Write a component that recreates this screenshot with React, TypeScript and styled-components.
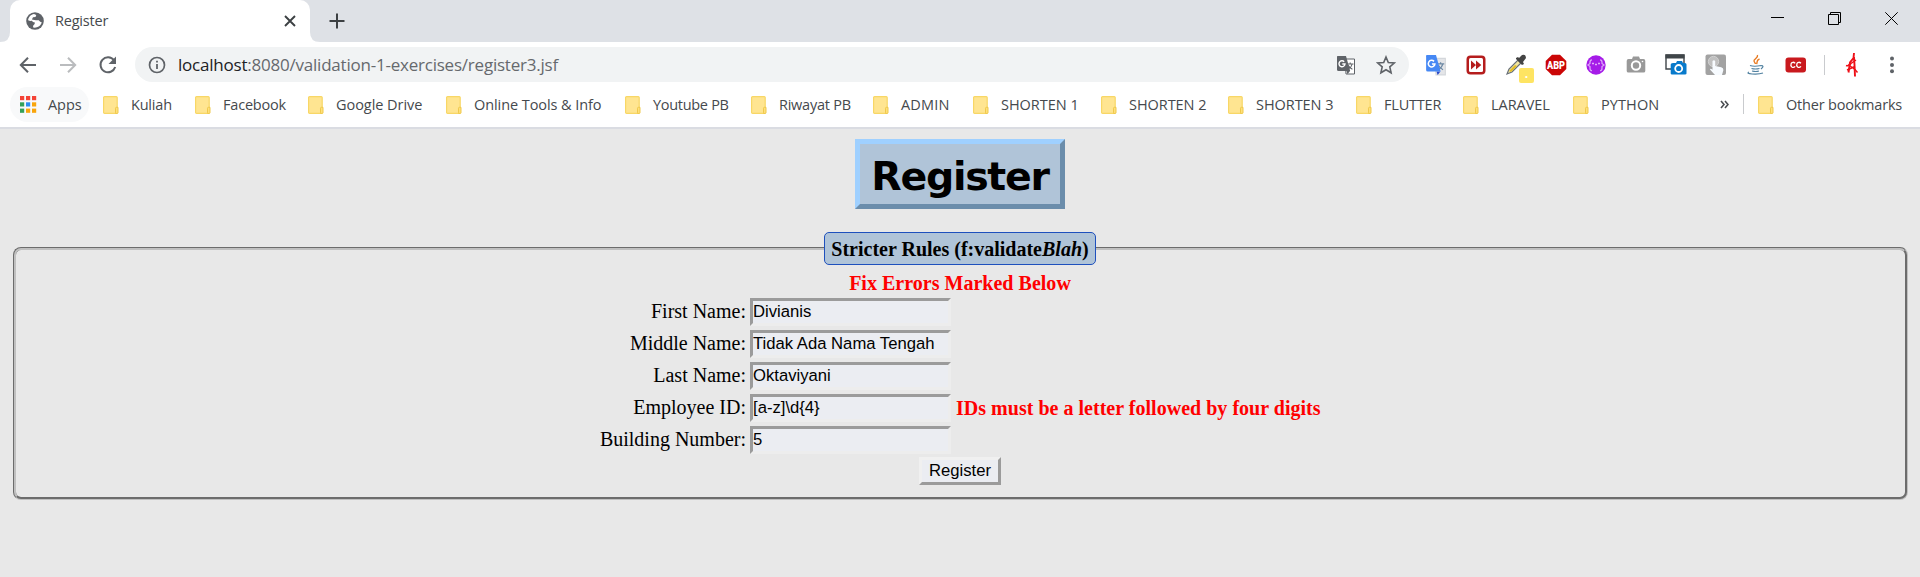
import React from 'react';
import styled, { createGlobalStyle } from 'styled-components';

const GlobalStyle = createGlobalStyle`
  * { box-sizing: border-box; }
  body { margin: 0; background: #e8e8e8; }
`;

const UI_FONT = "'Segoe UI', 'Open Sans', 'Noto Sans', sans-serif";

const Window = styled.div`
  width: 1920px;
  height: 577px;
  display: flex;
  flex-direction: column;
  overflow: hidden;
  background: #e8e8e8;
`;

/* ---------- Tab strip ---------- */
const TabStrip = styled.header`
  height: 42px;
  flex: none;
  display: flex;
  align-items: stretch;
  background: #dee1e6;
  padding-right: 22px;
`;
const TabCurve = styled.svg`
  width: 10px;
  height: 10px;
  align-self: flex-end;
  display: block;
`;
const Tab = styled.div`
  width: 300px;
  display: flex;
  align-items: center;
  background: #fff;
  border-radius: 10px 10px 0 0;
  padding: 0 14px 0 16px;
`;
const TabTitle = styled.span`
  flex: 1;
  margin-left: 11px;
  font: 14.5px/20px ${UI_FONT};
  letter-spacing: -0.2px;
  color: #45494d;
`;
const NewTab = styled.div`
  display: flex;
  align-items: center;
  margin-left: 9px;
`;
const WindowControls = styled.div`
  margin-left: auto;
  display: flex;
  gap: 44px;
  padding-top: 12px;
`;

/* ---------- Toolbar ---------- */
const Toolbar = styled.div`
  height: 45px;
  flex: none;
  display: flex;
  align-items: center;
  background: #fff;
  padding: 0 25px 0 18px;
`;
const NavButtons = styled.div`
  display: flex;
  gap: 20px;
  width: 117px;
`;
const Omnibox = styled.div`
  width: 1274px;
  height: 35px;
  display: flex;
  align-items: center;
  border-radius: 18px;
  background: #f1f3f4;
  padding: 0 13px 0 13px;
`;
const Url = styled.span`
  flex: 1;
  margin-left: 12px;
  font: 17px/24px ${UI_FONT};
  letter-spacing: -0.22px;
  color: #66696d;
`;
const Host = styled.span`
  color: #202124;
`;
const OmniboxActions = styled.div`
  display: flex;
  align-items: center;
  gap: 20px;
`;
const Extensions = styled.div`
  display: flex;
  align-items: center;
  gap: 16px;
  margin-left: 15px;
`;
const ExtensionSlot = styled.div`
  width: 24px;
  height: 28px;
  position: relative;
  display: flex;
  align-items: center;
  justify-content: center;
`;
const Badge = styled.span`
  position: absolute;
  left: 15px;
  top: 17px;
  width: 15px;
  height: 15px;
  border-radius: 2px;
  background: #fee462;
  color: #fff;
  font: bold 12px/11px ${UI_FONT};
  text-align: center;
`;
const ToolbarDivider = styled.div`
  width: 1px;
  height: 20px;
  background: #c9cbce;
  margin-left: 16px;
`;
const ProfileArea = styled.div`
  display: flex;
  align-items: center;
  margin-left: auto;
  gap: 29px;
`;

/* ---------- Bookmarks ---------- */
const BookmarkBar = styled.nav`
  height: 42px;
  flex: none;
  display: flex;
  align-items: flex-start;
  background: #fff;
  border-bottom: 2px solid #dadce2;
  padding-left: 10px;
`;
const AppsButton = styled.div`
  width: 79px;
  height: 35px;
  margin-right: 14px;
  display: flex;
  align-items: center;
  gap: 11px;
  padding-left: 10px;
  border-radius: 18px;
  background: #f8f9fa;
`;
const Bookmark = styled.div<{ $width: number }>`
  width: ${(p) => p.$width}px;
  height: 35px;
  flex: none;
  display: flex;
  align-items: center;
  gap: 11px;
`;
const BookmarkLabel = styled.span<{ $track?: number }>`
  font: 14.5px/20px ${UI_FONT};
  letter-spacing: ${(p) => p.$track ?? -0.2}px;
  color: #45494d;
  white-space: nowrap;
`;
const Overflow = styled.div`
  width: 23px;
  height: 35px;
  display: flex;
  align-items: center;
  margin-left: 27px;
`;
const BookmarkDivider = styled.div`
  width: 1px;
  height: 20px;
  margin: 7px 14px 0 0;
  background: #c9cbce;
`;

/* ---------- Page ---------- */
const Page = styled.main`
  flex: 1;
  display: flex;
  flex-direction: column;
  align-items: center;
  padding: 10px 12px 0 12px;
  font: 20px/23px 'Times New Roman', 'Liberation Serif', serif;
  color: #000;
`;
const PageTitle = styled.h1`
  width: 210px;
  height: 70px;
  margin: 0 0 23px;
  border: 5px solid;
  border-color: #9fd0ff #6b8dab #6b8dab #9fd0ff;
  background: #b0c4d8;
  font: bold 39.5px/64px Verdana, 'DejaVu Sans', sans-serif;
  letter-spacing: -1.3px;
  text-align: center;
`;
const FormFrame = styled.fieldset`
  align-self: stretch;
  height: 268px;
  margin: 0 0 0 1px;
  padding: 0 1px 0 0;
  border: 3px groove #c0c0c0;
  border-radius: 8px;
  display: block;
`;
const FormLegend = styled.legend`
  width: 272px;
  height: 33px;
  margin: 0 auto;
  padding: 0;
  border: 1px solid #1e50bd;
  border-radius: 5px;
  background: #b0c4d8;
  font-weight: bold;
  line-height: 32px;
  text-align: center;
`;
const FormBody = styled.form`
  display: flex;
  flex-direction: column;
  align-items: center;
`;
const ErrorText = styled.strong`
  color: #f00;
  letter-spacing: 0.02px;
  white-space: nowrap;
`;
const ErrorHeading = styled.div`
  height: 32px;
  padding-top: 7px;
`;
const Fields = styled.div`
  display: grid;
  grid-template-columns: 148px 201px 367px;
  grid-auto-rows: 28px;
  gap: 4px 5px;
  align-items: center;
  padding-top: 1px;
`;
const FieldLabel = styled.label`
  margin: 0 -1px 1px 0;
  text-align: right;
  white-space: nowrap;
`;
const FieldInput = styled.input`
  width: 201px;
  height: 28px;
  padding: 0 0 1px;
  border: 3px solid;
  border-color: #9b9b9b #ededed #ededed #9b9b9b;
  border-radius: 0;
  background: #ebedf2;
  color: #000;
  font: 16.67px Arial, 'Liberation Sans', sans-serif;
  outline: none;
`;
const SubmitButton = styled.button`
  width: 82px;
  height: 28px;
  margin-top: 3px;
  padding: 0 0 1px;
  border: 3px solid;
  border-color: #f0f0f0 #9b9b9b #9b9b9b #f0f0f0;
  background: #ebedf2;
  color: #000;
  font: 16.67px Arial, 'Liberation Sans', sans-serif;
`;

/* ---------- Icons ---------- */
const Globe = () => (
  <svg width="18" height="18" viewBox="0 0 18 18">
    <circle cx="9" cy="9" r="8.8" fill="#5f6368" />
    <path d="M8 2c-3 .4-5.600 3-5.900 6.200L4.200 9l1.600-.2L7 10l1.900.6-.3 1.500-1.500 1.700v1.700c3.700.8 7.800-1.400 8.600-5.300l-1.500-.4-1.500-1.600H9.900L8.400 7.900 5.900 7.500 7 5.300 9.500 4.900 10.300 3z" fill="#fff" />
  </svg>
);
const Back = ({ flip = false }: { flip?: boolean }) => (
  <svg width="20" height="20" viewBox="0 0 20 20" fill="none" stroke={flip ? '#babcbe' : '#5f6368'} strokeWidth="2">
    <path d={flip ? 'M2 10h15M10 2.700 17.200 10 10 17.300' : 'M18 10H3M10 2.700 2.800 10 10 17.300'} />
  </svg>
);
const Reload = () => (
  <svg width="20" height="20" viewBox="0 0 20 20">
    <path d="M16 5.200A7.500 7.500 0 1 0 17.200 12" fill="none" stroke="#5f6368" strokeWidth="2" />
    <path d="M18 1.500V9h-7.500z" fill="#5f6368" />
  </svg>
);
const Info = () => (
  <svg width="18" height="18" viewBox="0 0 18 18">
    <circle cx="9" cy="9" r="7.500" fill="none" stroke="#5f6368" strokeWidth="1.700" />
    <path d="M8.100 8h1.800v5H8.100zM8.100 4.800h1.800v1.800H8.100z" fill="#5f6368" />
  </svg>
);
const Translate = ({ colored = false }: { colored?: boolean }) => (
  <svg width={colored ? 22 : 20} height={colored ? 22 : 20} viewBox="0 0 20 20">
    <path d="M9 4h9.500v15H10z" fill={colored ? '#e4e5e8' : '#fff'} stroke={colored ? '#d4d7db' : '#5f6368'} />
    <path d="M11 9h6.500M14.200 7.500V9m2 0c-.5 2.300-2 4-4 5m0-3.700c.8 1.800 2.200 3.100 4.200 4" fill="none" stroke={colored ? '#6d89a4' : '#5f6368'} strokeWidth="1.100" />
    <path d="m10.500 16 3.500 0-2.500 3.200z" fill={colored ? '#2647c9' : '#5f6368'} />
    <path d="M1.500 1H10l4.200 15H2.500Q1 16 1 14.500V2q0-1 .5-1z" fill={colored ? '#4688f4' : '#5f6368'} />
    <path d="M8.200 6.700A3 3 0 1 0 9 9H6.300" fill="none" stroke="#fff" strokeWidth="1.400" />
  </svg>
);
const Star = () => (
  <svg width="20" height="20" viewBox="0 0 20 20" fill="none" stroke="#5f6368" strokeWidth="1.600">
    <path d="m10 2 2.300 5.500 6 .5-4.500 3.900 1.300 5.900L10 14.700l-5.100 3.100 1.300-5.900L1.700 8l6-.5z" />
  </svg>
);
const FastForward = () => (
  <svg width="20" height="20" viewBox="0 0 20 20">
    <rect x=".5" y=".5" width="19" height="19" rx="4" fill="#b51d1d" />
    <rect x="3" y="3" width="14" height="14" rx="1.500" fill="#fff" />
    <path d="m5 5.500 5 4.500-5 4.500zM10 5.500l5.300 4.500-5.300 4.500z" fill="#b51d1d" />
  </svg>
);
const Dropper = () => (
  <svg width="22" height="22" viewBox="0 0 22 22">
    <path d="M2 20 4 15 13 6l3 3-9 9z" fill="#f1e5a0" stroke="#687078" strokeWidth="1.200" />
    <path d="m4 17 6-6 2 1-6 6z" fill="#e4be25" />
    <path d="m11 4 2-1 1 1 3-3q4-1 4 3l-3 4 1 2-2 1-6-6z" fill="#444" />
  </svg>
);
const AdBlock = () => (
  <svg width="22" height="22" viewBox="0 0 22 22">
    <path d="M7 .7h8l6.300 6.300v8L15 21.300H7L.7 15V7z" fill="#cb0606" />
    <text x="11" y="14.600" textAnchor="middle" textLength="18" lengthAdjust="spacingAndGlyphs" fontFamily="Roboto, sans-serif" fontWeight="900" fontSize="10" fill="#fff">ABP</text>
  </svg>
);
const PurpleFace = () => (
  <svg width="20" height="20" viewBox="0 0 20 20">
    <circle cx="10" cy="10" r="9.700" fill="#a51be8" />
    <path d="M6 4.800q-2 0-2 2.500v1.200L2 10l2 1.500v1.700q0 2.500 2 2.500M14 4.800q2 0 2 2.500v1.200l2 1.500-2 1.500v1.700q0 2.500-2 2.500" fill="none" stroke="#dca6f8" strokeWidth="1.300" />
    <path d="M6.200 8.500h1.600M9.200 9.500h1.600M12.200 8.500h1.600" stroke="#efd3fc" fill="none" strokeWidth="1.400" />
  </svg>
);
const Camera = () => (
  <svg width="20" height="20" viewBox="0 0 20 20">
    <path d="M2.500 4H6l1-2.500h6L14 4h3.500Q19.300 4 19.300 6v10q0 1.500-1.800 1.500h-15Q.7 17.500.7 16V6q0-2 1.800-2z" fill="#999" />
    <circle cx="10" cy="10.500" r="4.200" fill="#999" stroke="#fff" strokeWidth="2" />
    <circle cx="16.500" cy="6.500" r=".8" fill="#fff" />
  </svg>
);
const WindowCamera = () => (
  <svg width="22" height="22" viewBox="0 0 22 22">
    <path d="M1 1h18v14H1z" fill="#fff" stroke="#3f4549" strokeWidth="1.400" />
    <path d="M.5.500h19v4H.500z" fill="#3f4549" />
    <path d="M8 9h3l1-2h5l1 2h2q1.500 0 1.500 1.500v9q0 1-1.500 1H7q-1.300 0-1.300-1v-9Q5.700 9 8 9z" fill="#087acb" />
    <circle cx="13.700" cy="14.500" r="3.500" fill="none" stroke="#fff" strokeWidth="1.800" />
  </svg>
);
const Touch = () => (
  <svg width="22" height="22" viewBox="0 0 22 22">
    <rect x=".5" y=".5" width="20.500" height="20.500" rx="2" fill="#a2a2a2" />
    <circle cx="8.500" cy="7.500" r="5.200" fill="#c0c0c0" stroke="#d0d0d0" />
    <path d="M7.500 7q1.500-1.500 2.700 0v5l6 1.200q2.300.6 2.200 2.800L17 21h-7L5 15.500q.3-1.500 2.500.2z" fill="#f7fbff" />
  </svg>
);
const Java = () => (
  <svg width="20" height="22" viewBox="0 0 20 22" fill="none">
    <path d="M11.500 1c1 3-4 4-3.500 6 .2 1.200 1.500 2 1.500 3M13.500 5c-4 1.500-1.500 3-3 5" stroke="#e87a20" strokeWidth="1.400" />
    <path d="M4 11.500q4 1.500 11 0M5.500 14.500q4 1 8 0M6 17q4 1 7 0M3 18q-3 1.500 3 2 7 .5 11-1M15 11.500q4 0 0 3.500" stroke="#5282a1" strokeWidth="1.200" />
  </svg>
);
const Captions = () => (
  <svg width="22" height="16" viewBox="0 0 22 16">
    <rect x=".5" y=".5" width="20.500" height="15" rx="3" fill="#c9191e" />
    <path d="M10.200 6.300Q7.800 4.200 6.200 6.400q-.9 2 .6 3.500 1.700 1.300 3.400-.5M16 6.300q-2.400-2.100-4 .1-.9 2 .6 3.500 1.700 1.300 3.400-.5" fill="none" stroke="#fff" strokeWidth="1.300" />
  </svg>
);
const ProfileMark = () => (
  <svg width="15" height="26" viewBox="0 0 15 26" fill="none" stroke="#ee1018">
    <path d="M9 1 8.500 6 5 10.500 3.500 20.500M9 5l.5 8 .5 11.500" strokeWidth="1.900" />
    <path d="M1 13.500q3 1 5-2l5-3.500M2 18l8-3.500M3 12.500l7 5 2.500 3" strokeWidth="1.400" />
  </svg>
);
const Menu = () => (
  <svg width="6" height="18" viewBox="0 0 6 18" fill="#5f6368">
    <circle cx="3" cy="2.500" r="2" />
    <circle cx="3" cy="9" r="2" />
    <circle cx="3" cy="15.300" r="2" />
  </svg>
);
const AppsGrid = () => (
  <svg width="17" height="17" viewBox="0 0 17 17">
    {['#f44336', '#f44336', '#f44336', '#34a058', '#2d8cf0', '#f9a50b', '#34a058', '#f9a50b', '#f9a50b'].map((c, i) => (
      <rect key={i} x={(i % 3) * 6} y={Math.floor(i / 3) * 6.300} width="4.200" height="4.200" fill={c} />
    ))}
  </svg>
);
const Folder = () => (
  <svg width="17" height="18" viewBox="0 0 17 18">
    <rect x=".6" y=".6" width="13.600" height="16.800" rx="1" fill="#ffe591" stroke="#f8d766" strokeWidth="1.200" />
    <path d="M12.500 16.800v-4.500q0-1 1-1h1.500v5.500q0 .6-.8.6h-1.700z" fill="#ffe07a" stroke="#efc94c" />
  </svg>
);

const bookmarks: { label: string; width: number; track?: number }[] = [
  { label: 'Kuliah', width: 92 },
  { label: 'Facebook', width: 113 },
  { label: 'Google Drive', width: 138, track: -0.05 },
  { label: 'Online Tools & Info', width: 179, track: -0.08 },
  { label: 'Youtube PB', width: 126, track: -0.3 },
  { label: 'Riwayat PB', width: 122, track: -0.25 },
  { label: 'ADMIN', width: 100, track: 0.2 },
  { label: 'SHORTEN 1', width: 128, track: -0.02 },
  { label: 'SHORTEN 2', width: 127, track: -0.05 },
  { label: 'SHORTEN 3', width: 128, track: -0.05 },
  { label: 'FLUTTER', width: 107 },
  { label: 'LARAVEL', width: 110, track: -0.05 },
  { label: 'PYTHON', width: 120, track: 0.1 },
];

const fields: { label: string; value: string; error?: string }[] = [
  { label: 'First Name:', value: 'Divianis' },
  { label: 'Middle Name:', value: 'Tidak Ada Nama Tengah' },
  { label: 'Last Name:', value: 'Oktaviyani' },
  { label: 'Employee ID:', value: '[a-z]\\d{4}', error: 'IDs must be a letter followed by four digits' },
  { label: 'Building Number:', value: '5' },
];

const extensions = [
  () => <Translate colored />, FastForward, Dropper, AdBlock, PurpleFace,
  Camera, WindowCamera, Touch, Java, Captions,
];

export default function App() {
  return (
    <Window>
      <GlobalStyle />
      <TabStrip>
        <TabCurve viewBox="0 0 10 10"><path d="M10 0v10H0Q10 10 10 0z" fill="#fff" /></TabCurve>
        <Tab>
          <Globe />
          <TabTitle>Register</TabTitle>
          <svg width="12" height="12" viewBox="0 0 12 12" stroke="#3c4043" strokeWidth="1.900"><path d="m1 1 10 10M11 1 1 11" /></svg>
        </Tab>
        <TabCurve viewBox="0 0 10 10"><path d="M0 0v10h10Q0 10 0 0z" fill="#fff" /></TabCurve>
        <NewTab>
          <svg width="16" height="16" viewBox="0 0 16 16" stroke="#3c4043" strokeWidth="2"><path d="M8 .5v15M.5 8h15" /></svg>
        </NewTab>
        <WindowControls>
          <svg width="13" height="13" viewBox="0 0 13 13"><path d="M0 5.500h13" stroke="#000" /></svg>
          <svg width="13" height="13" viewBox="0 0 13 13" fill="none" stroke="#000"><path d="M.5 2.500h10v10H.5zM2.500 2.500v-2h10v10h-2" /></svg>
          <svg width="13" height="13" viewBox="0 0 13 13" stroke="#000"><path d="m.3.300 12.400 12.400M12.700.3.300 12.700" /></svg>
        </WindowControls>
      </TabStrip>
      <Toolbar>
        <NavButtons><Back /><Back flip /><Reload /></NavButtons>
        <Omnibox>
          <Info />
          <Url><Host>localhost</Host>:8080/validation-1-exercises/register3.jsf</Url>
          <OmniboxActions><Translate /><Star /></OmniboxActions>
        </Omnibox>
        <Extensions>
          {extensions.map((Icon, i) => (
            <ExtensionSlot key={i}>
              <Icon />
              {Icon === Dropper && <Badge>.</Badge>}
            </ExtensionSlot>
          ))}
        </Extensions>
        <ToolbarDivider />
        <ProfileArea><ProfileMark /><Menu /></ProfileArea>
      </Toolbar>
      <BookmarkBar>
        <AppsButton><AppsGrid /><BookmarkLabel $track={-0.05}>Apps</BookmarkLabel></AppsButton>
        {bookmarks.map((b) => (
          <Bookmark key={b.label} $width={b.width}>
            <Folder /><BookmarkLabel $track={b.track}>{b.label}</BookmarkLabel>
          </Bookmark>
        ))}
        <Overflow>
          <svg width="9" height="9" viewBox="0 0 9 9" fill="none" stroke="#4a4d51" strokeWidth="1.600"><path d="m1 1 3 3.500L1 8M5 1l3 3.500L5 8" /></svg>
        </Overflow>
        <BookmarkDivider />
        <Bookmark $width={150}><Folder /><BookmarkLabel>Other bookmarks</BookmarkLabel></Bookmark>
      </BookmarkBar>
      <Page>
        <PageTitle>Register</PageTitle>
        <FormFrame>
          <FormLegend>Stricter Rules (f:validate<i>Blah</i>)</FormLegend>
          <FormBody onSubmit={(e) => e.preventDefault()}>
            <ErrorHeading><ErrorText>Fix Errors Marked Below</ErrorText></ErrorHeading>
            <Fields>
              {fields.map((f, i) => (
                <React.Fragment key={f.label}>
                  <FieldLabel htmlFor={`field-${i}`}>{f.label}</FieldLabel>
                  <FieldInput id={`field-${i}`} defaultValue={f.value} />
                  <span>{f.error && <ErrorText>{f.error}</ErrorText>}</span>
                </React.Fragment>
              ))}
            </Fields>
            <SubmitButton>Register</SubmitButton>
          </FormBody>
        </FormFrame>
      </Page>
    </Window>
  );
}
